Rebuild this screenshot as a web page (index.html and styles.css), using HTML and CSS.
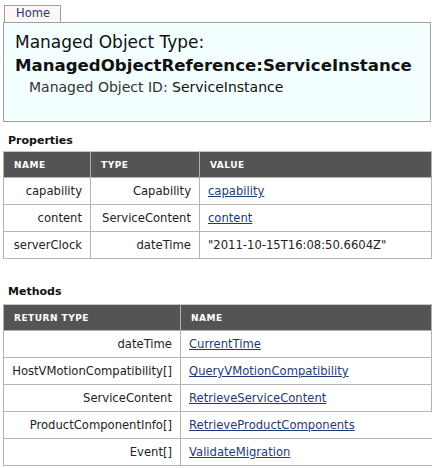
FILE: index.html
```html
<!DOCTYPE html>
<html>
<head>
<meta charset="utf-8">
<link rel="stylesheet" href="styles.css">
</head>
<body>
<div class="page">
  <div class="tabs"><a class="tab" href="#">Home</a></div>
  <div class="summary">
    <div class="type-label">Managed Object Type:</div>
    <div class="type-name">ManagedObjectReference:ServiceInstance</div>
    <div class="moid"><span class="moid-label">Managed Object ID:</span> <span class="moid-value">ServiceInstance</span></div>
  </div>

  <h2 class="section">Properties</h2>
  <table class="grid props">
    <thead>
      <tr><th class="c-name">NAME</th><th class="c-type">TYPE</th><th>VALUE</th></tr>
    </thead>
    <tbody>
      <tr><td class="r">capability</td><td class="r">Capability</td><td><a href="#">capability</a></td></tr>
      <tr><td class="r">content</td><td class="r">ServiceContent</td><td><a href="#">content</a></td></tr>
      <tr><td class="r">serverClock</td><td class="r">dateTime</td><td>"2011-10-15T16:08:50.6604Z"</td></tr>
    </tbody>
  </table>

  <h2 class="section methods-title">Methods</h2>
  <table class="grid methods">
    <thead>
      <tr><th class="c-ret">RETURN TYPE</th><th>NAME</th></tr>
    </thead>
    <tbody>
      <tr><td class="r">dateTime</td><td><a href="#">CurrentTime</a></td></tr>
      <tr><td class="r">HostVMotionCompatibility[]</td><td><a href="#">QueryVMotionCompatibility</a></td></tr>
      <tr><td class="r">ServiceContent</td><td><a href="#">RetrieveServiceContent</a></td></tr>
      <tr class="open"><td class="r">ProductComponentInfo[]</td><td><a href="#">RetrieveProductComponents</a></td></tr>
      <tr class="open"><td class="r">Event[]</td><td><a href="#">ValidateMigration</a></td></tr>
    </tbody>
  </table>
</div>
</body>
</html>
```

FILE: styles.css
```css
html, body {
  margin: 0;
  padding: 0;
  background: #ffffff;
  overflow: hidden;
}
body {
  font-family: "DejaVu Sans", Verdana, sans-serif;
  color: #000;
}
.page {
  padding: 5px 3px 0 3px;
}
.tabs {
  display: flex;
  padding-left: 1px;
}
.tab {
  display: block;
  box-sizing: border-box;
  width: 57px;
  height: 17px;
  border: 1px solid #a0a0a0;
  border-bottom: none;
  background: #fff6f6;
  color: #1d3b78;
  text-decoration: none;
  font-size: 11.5px;
  line-height: 15px;
  padding-left: 11px;
}
.summary {
  box-sizing: border-box;
  height: 100px;
  border: 1px solid #a0a0a0;
  background: #f4ffff;
  padding: 8px 0 0 11px;
}
.type-label {
  font-size: 17px;
  line-height: 23px;
  color: #111;
}
.type-name {
  font-size: 16.6px;
  line-height: 23px;
  font-weight: bold;
  color: #111;
}
.moid {
  font-size: 14px;
  line-height: 20px;
  padding-left: 14px;
  color: #333;
}
.moid-value { color: #111; }
.section {
  margin: 0;
  font-size: 11px;
  font-weight: bold;
  line-height: 14px;
  padding: 12px 0 0 5px;
  height: 17px;
  color: #111;
}
.methods-title {
  padding-top: 26px;
  height: 19px;
}
.grid {
  width: 429px;
  border-collapse: collapse;
  font-size: 11.6px;
  color: #222;
}
.grid th {
  background: #545454;
  color: #ffffff;
  font-size: 9px;
  font-weight: bold;
  letter-spacing: 0.5px;
  text-align: left;
  height: 25px;
  padding: 0 0 0 10px;
  border: 1px solid #b0b0b0;
  border-top-color: #c8c8c8;
}
.grid td {
  height: 26px;
  padding: 0 8px;
  border: 1px solid #b4b4b4;
  white-space: nowrap;
}
.grid td.r { text-align: right; }
.grid a { color: #1d3b78; }
.c-name { width: 76px; }
.c-type { width: 98px; }
.c-ret { width: 166px; }
.methods tr.open td:last-child { border-right-color: transparent; }
```
